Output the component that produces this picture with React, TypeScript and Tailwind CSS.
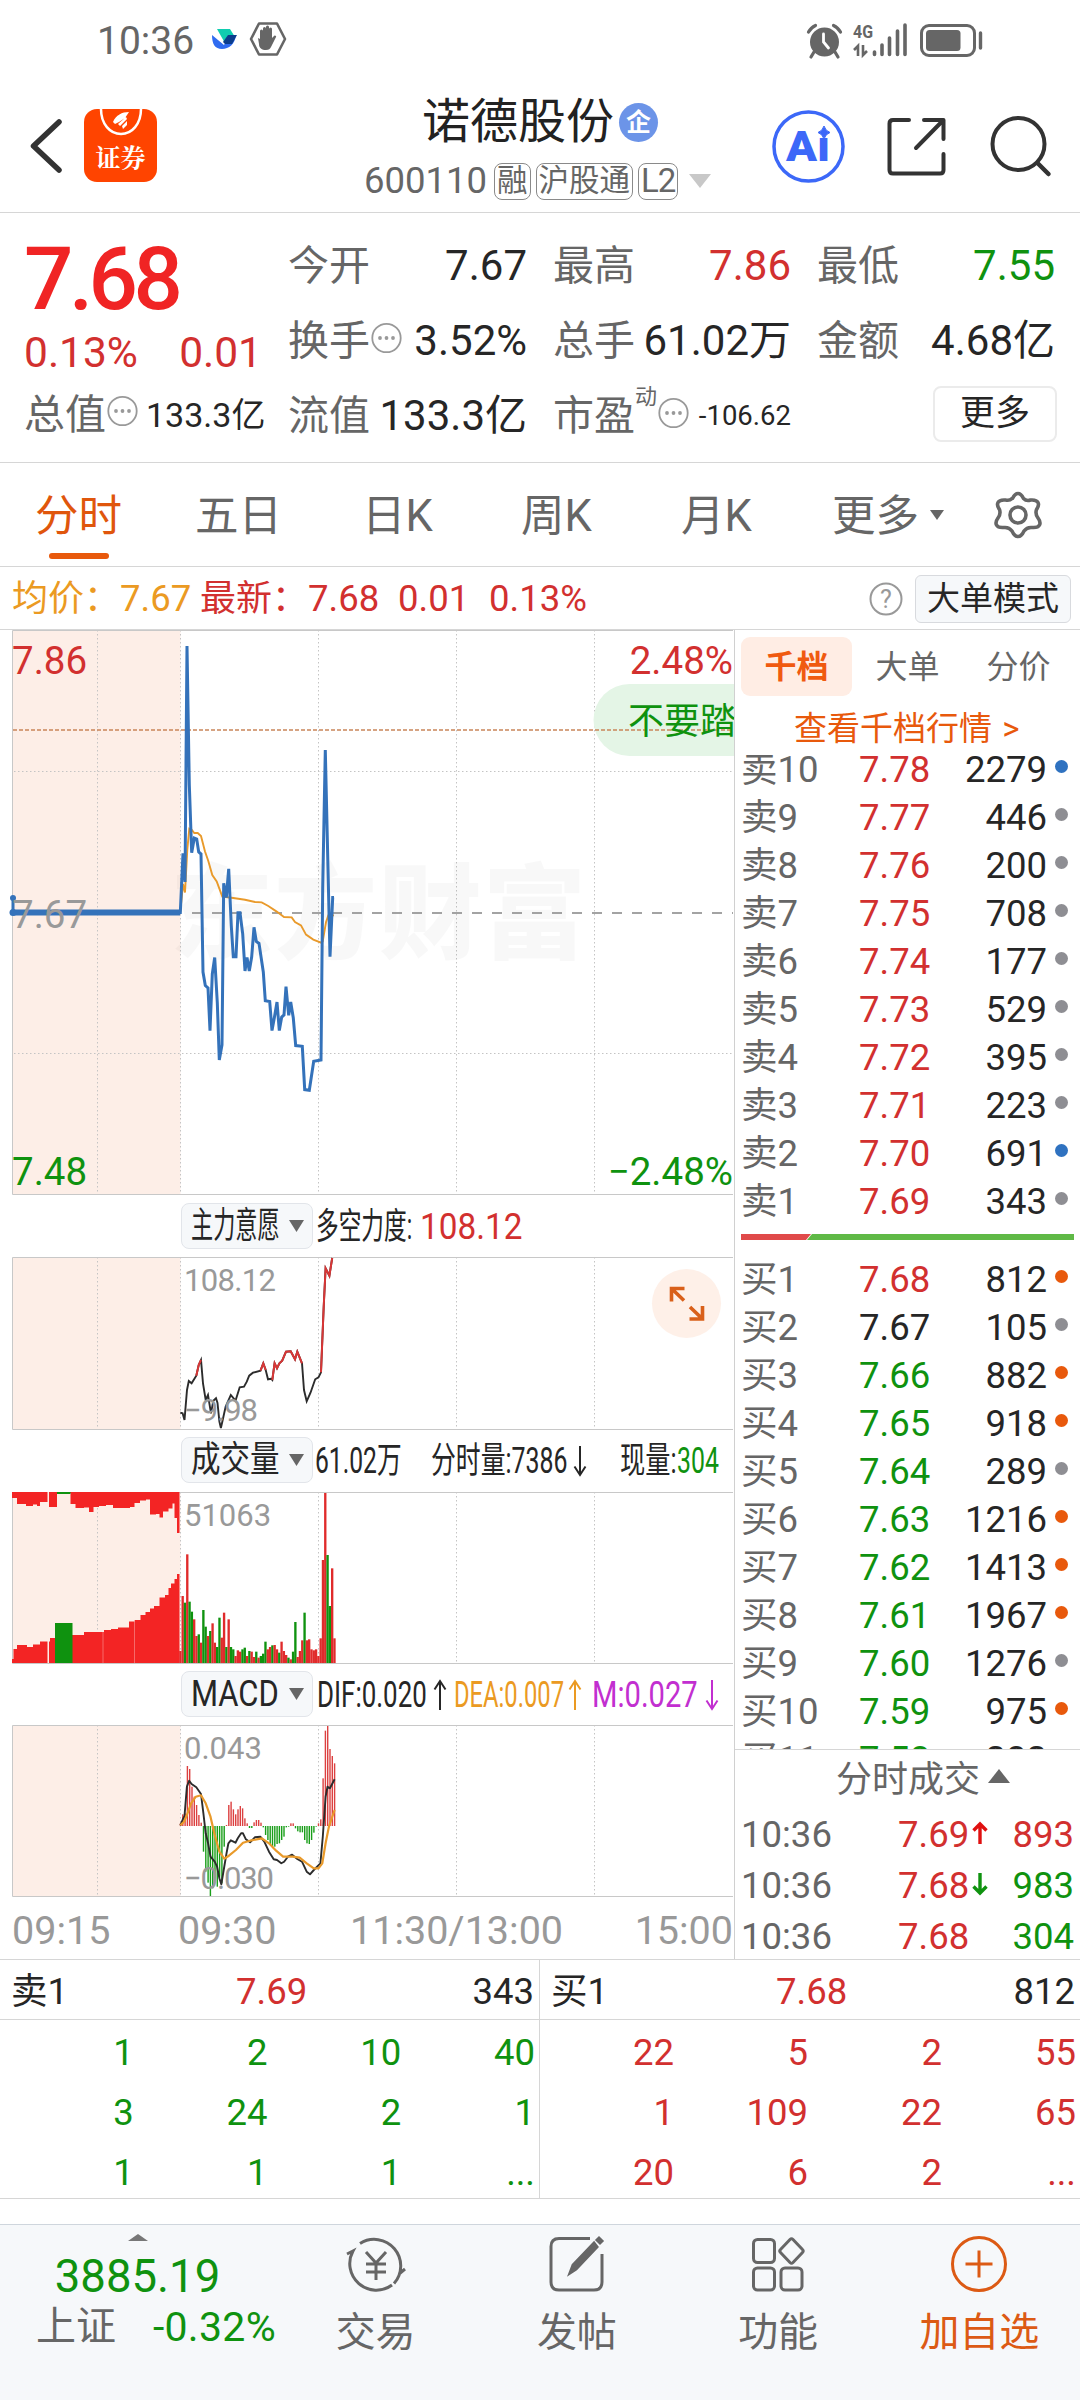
import { ReactNode } from 'react';

type Point = [number, number];

interface DepthRow {
	label: string;
	price: string;
	qty: string;
	color: string;
	dot: string;
}

const RED = 'text-[#d2302f]';
const GREEN = 'text-[#0f920f]';
const DARK = 'text-[#262626]';
const BLUE_DOT = 'bg-[#2f72c0]';
const GRAY_DOT = 'bg-[#8e8e93]';
const ORANGE_DOT = 'bg-[#e8590c]';

const SELLS: DepthRow[] = [
	{ label: '卖10', price: '7.78', qty: '2279', color: RED, dot: BLUE_DOT },
	{ label: '卖9', price: '7.77', qty: '446', color: RED, dot: GRAY_DOT },
	{ label: '卖8', price: '7.76', qty: '200', color: RED, dot: GRAY_DOT },
	{ label: '卖7', price: '7.75', qty: '708', color: RED, dot: GRAY_DOT },
	{ label: '卖6', price: '7.74', qty: '177', color: RED, dot: GRAY_DOT },
	{ label: '卖5', price: '7.73', qty: '529', color: RED, dot: GRAY_DOT },
	{ label: '卖4', price: '7.72', qty: '395', color: RED, dot: GRAY_DOT },
	{ label: '卖3', price: '7.71', qty: '223', color: RED, dot: GRAY_DOT },
	{ label: '卖2', price: '7.70', qty: '691', color: RED, dot: BLUE_DOT },
	{ label: '卖1', price: '7.69', qty: '343', color: RED, dot: GRAY_DOT }
];

const BUYS: DepthRow[] = [
	{ label: '买1', price: '7.68', qty: '812', color: RED, dot: ORANGE_DOT },
	{ label: '买2', price: '7.67', qty: '105', color: DARK, dot: GRAY_DOT },
	{ label: '买3', price: '7.66', qty: '882', color: GREEN, dot: ORANGE_DOT },
	{ label: '买4', price: '7.65', qty: '918', color: GREEN, dot: ORANGE_DOT },
	{ label: '买5', price: '7.64', qty: '289', color: GREEN, dot: GRAY_DOT },
	{ label: '买6', price: '7.63', qty: '1216', color: GREEN, dot: ORANGE_DOT },
	{ label: '买7', price: '7.62', qty: '1413', color: GREEN, dot: ORANGE_DOT },
	{ label: '买8', price: '7.61', qty: '1967', color: GREEN, dot: ORANGE_DOT },
	{ label: '买9', price: '7.60', qty: '1276', color: GREEN, dot: GRAY_DOT },
	{ label: '买10', price: '7.59', qty: '975', color: GREEN, dot: ORANGE_DOT },
	{ label: '买11', price: '7.58', qty: '282', color: GREEN, dot: GRAY_DOT }
];

const PRICE_LINE =
	'13,898 13,912.5 180.3,912.5 183,853.4 185,882 187,646 189.3,784.6 191.7,852.7 194.3,838 196.7,839 198.7,852 201,854 203,972 205.3,985.5 208,988 210,1030.6 212.3,974 214.7,957.5 217.3,1002.7 219.3,1060 222,1044.8 223.7,883.3 226.3,897.5 228.7,868.8 231.3,926 233.3,956.8 236,956.8 238,912.8 240,912.8 242.7,933.8 245,971 247,957.5 249.3,971 251.7,956.8 254,927.3 256.3,941.5 259,943.4 263.3,972 265.3,1000.8 269.7,1001.5 272,1030.6 274.3,1018 277,1002 279.3,1030.6 281.7,1017 284,1015 286,986.6 288.7,1015.3 290.7,1002 293.3,1018 295.7,1045.6 302.3,1046.3 304.7,1089.6 309.3,1090.3 313.7,1061.3 321,1060 322.7,888 325.3,750 328,868.8 330,956.8 332.7,897.5 334,897.5';
const AVG_LINE =
	'180.3,912.5 183,884 185,892.5 187.3,849.6 189.3,828.6 191.7,829.7 194.3,833 197.7,833 201,836 205,851.5 208.3,861 212.3,875 216.7,881.4 222.3,896.7 233.3,898 245,899.7 255,902 261.7,902.4 268.3,906 276.7,911.6 284,917 291.7,917.4 295,922 301,925.4 306,934.6 313.3,939.6 321,942.6 322.7,941.5 326,922.3 328.3,915.4 334,915.4';

const FORCE_LINE =
	'180.3,1412.7 182.6,1413.3 184.5,1420 187,1390 188.8,1381 191.6,1383.3 196.3,1375.7 198.7,1365 201,1360 203,1383.3 205.7,1400 208,1395 211,1413.3 213.3,1400.7 216,1398.3 217.5,1403 219.4,1421.7 220.9,1428 222.7,1420 225.6,1406.7 230.8,1395 235.5,1400.7 239.7,1387.3 244,1386.7 246.8,1381.7 249.2,1375.7 253,1372.7 260.5,1370.7 263.3,1363.3 265.7,1370 268,1379.3 271,1378.7 272.3,1380 274.6,1363.3 277,1368.3 279.4,1363.3 282.2,1360.7 286,1351.7 290.7,1351.3 295,1359.3 297.3,1351.7 302,1363.3 304,1390 306.7,1401.3 310.5,1392.7 315.2,1379.3 318.5,1377.3 321,1372.3 323.7,1306.7 325.6,1268.3 329.4,1275.7 332.2,1258';
const FORCE_RED = [
	'196.3,1375.7 198.7,1365 201,1360',
	'260.5,1370.7 263.3,1363.3 265.7,1370',
	'272.3,1380 274.6,1363.3 277,1368.3 279.4,1363.3 282.2,1360.7 286,1351.7 290.7,1351.3 295,1359.3 297.3,1351.7 302,1363.3',
	'321,1372.3 323.7,1306.7 325.6,1268.3 329.4,1275.7 332.2,1258'
];

// one value per minute from 09:30, negative = falling minute
const VOLUME = [
	36, 201, -181, 326, -184, -154, 131, 81, -86, 61, -159, -109, 81, -96, 119, 61, -48, -136, 76, 151, -48, 131, -48, -41, 21, 38, 34, -41, -46,
	21, -36, 34, 18, -34, 16, -21, -28, -64, 41, 48, -53, 54, 41, -31, 64, 36, 24, -16, 11, -34, -123, 18, 36, 68, -151, 68, 71, 41, 38, 41, 21,
	74, 309, 510, -324, -171, 284, 74
];
const MACD_BARS = [
	8, 35, 38, 180, 171, 118, 88, 63, 33, 10, -77, -137, -170, -210, -187, -157, -182, -152, -172, -62, 3, 63, 73, 50, 35, 50, 60, 53, 23, 8, -6,
	-6, 11, 18, 18, 10, -4, -27, -42, -54, -62, -62, -54, -52, -42, -32, -4, -2, 8, 8, -7, -16, -19, -19, -42, -52, -54, -42, -20, -2, 8, 20, 143,
	286, 300, 231, 210, 188
];

// call auction: [x, height] steps
const AUCTION_BOTTOM: Point[] = [
	[12, 4], [13.5, 14], [17, 18], [27, 16], [33, 18.5], [40, 21.5], [50, 25], [70, 28], [84, 31], [104, 33], [111, 34], [118, 35.5], [129, 41.5],
	[134.5, 43], [140.5, 48], [145.5, 51], [150, 54.5], [154, 57], [159.5, 65.5], [165, 68], [168.5, 75], [171, 79.5], [174.5, 84], [177, 89], [179.5, 0]
];
const AUCTION_TOP: Point[] = [
	[12, 6], [17, 12], [26, 14], [33, 12.5], [37, 14], [40, 10], [49, 15], [57, 1], [70.5, 12], [75.5, 16], [84, 15.5], [89, 20], [93.5, 15], [99, 14],
	[106, 13], [113, 16], [130, 15], [134.5, 11], [140, 8.5], [146, 7.5], [150, 22.5], [156, 22], [159.5, 25.5], [163, 19.5], [168.5, 16.5],
	[172.5, 11.5], [174.5, 26], [177, 41], [179.5, 0]
];

const DIF_POINTS: Point[] = [
	[382, 466], [387, 450], [391, 438], [396, 350], [401, 332], [406, 342], [416, 352], [426, 372], [431, 430], [436, 490], [441, 520], [446, 560],
	[455, 575], [460, 590], [465, 625], [469, 643], [474, 600], [480, 550], [484, 520], [489, 511], [499, 518], [504, 505], [511, 490], [515, 490],
	[521, 508], [530, 517], [540, 502], [552, 500], [560, 515], [570, 545], [580, 568], [587, 570], [596, 580], [602, 575], [610, 560], [619, 554],
	[630, 567], [640, 575], [650, 605], [657, 613], [665, 600], [679, 580], [684, 500], [690, 380], [694, 350], [699, 355], [709, 328]
];
const DEA_POINTS: Point[] = [
	[382, 466], [390, 455], [396, 435], [405, 400], [415, 380], [426, 376], [436, 400], [446, 440], [455, 495], [465, 545], [475, 566], [485, 557],
	[500, 540], [515, 518], [530, 512], [555, 505], [570, 520], [585, 542], [600, 560], [620, 560], [635, 563], [650, 580], [665, 595], [675, 595],
	[683, 580], [690, 520], [697, 470], [709, 420]
];

const toPoints = (points: Point[]) => points.map(([x, y]) => `${(x * 0.4719).toFixed(1)},${(1670 + y / 3).toFixed(1)}`).join(' ');

const stepPath = (steps: Point[], base: number, dir: number) =>
	`M12 ${base}` + steps.map(([x, h], i) => `${i ? `H${x}` : ''}V${base + dir * h}`).join('') + 'Z';

const Grid = ({ top, bottom }: { top: number; bottom: number }) => (
	<g fill="none" strokeWidth="1">
		<rect x="13" y={top} width="167.5" height={bottom - top} fill="#fdeee7" />
		{[97.5, 180.5, 318.5, 456.5, 594.5].map((x) => (
			<path key={x} d={`M${x} ${top}V${bottom}`} stroke="#c4c4c4" strokeDasharray="1.5 2.5" />
		))}
		<path d={`M733 ${top + 0.5}H12.5V${bottom + 0.5}H733`} stroke="#c8c8c8" />
	</g>
);

const InfoDot = () => (
	<svg width="32" height="32" viewBox="0 0 32 32" className="shrink-0">
		<circle cx="16.5" cy="16" r="14.2" fill="none" stroke="#999" strokeWidth="1.8" />
		<circle cx="10" cy="16" r="1.9" fill="#999" />
		<circle cx="16.5" cy="16" r="1.9" fill="#999" />
		<circle cx="23" cy="16" r="1.9" fill="#999" />
	</svg>
);

const StatusBar = () => (
	<div className="flex h-[80px] items-center justify-between pl-[97px] pr-[97px] text-[39px] text-[#666]">
		<div className="flex items-center">
			<span className="w-[99px] pt-[2px] leading-[82px]">10:36</span>
			<svg width="100" height="40" viewBox="196 21 100 40" className="mt-[1px]">
				<path d="M217 29h13l5 8-9 8z" fill="#10cdb0" />
				<path d="M212 35l12 10 4-7 8-3c-1 9-7 14-14 14s-10-5-10-14z" fill="#2f6bf0" />
				<path d="M223 42l5-7h9l-5 9h-7z" fill="#0c3d8c" />
				<path d="M259 23.500h18l8 15.500-8 15.500h-18l-8-15.500z" fill="none" stroke="#666" strokeWidth="2.600" strokeLinejoin="round" />
				<path d="M260 39v-8a1.500 1.500 0 013 0v-2.500a1.500 1.500 0 013 0V27a1.500 1.500 0 013 0v2a1.500 1.500 0 013 0v9l2.500-2.500c2 0 2 1 1 2.500l-4.500 9c-1 2-2 3-5 3-4 0-7-2-7-6l-1-6z" fill="#666" />
			</svg>
		</div>
		<svg width="180" height="40" viewBox="803 19 180 40">
			<circle cx="824.500" cy="41" r="14.500" fill="#666" />
			<path d="M814 51l-3 5M835 51l3 5M808.500 31a15 15 0 017-6.500M840.500 31a15 15 0 00-7-6.500" stroke="#666" strokeWidth="3.200" strokeLinecap="round" fill="none" />
			<path d="M823.500 33v8l5 6" stroke="#fff" strokeWidth="2.800" fill="none" strokeLinecap="round" />
			<text x="853" y="37" fontSize="19" fontWeight="700" textLength="20" lengthAdjust="spacingAndGlyphs" fill="#666">4G</text>
			<path d="M854 49l4-4v10M863 44v10l4-4" stroke="#666" strokeWidth="2.600" fill="none" />
			<path d="M874.500 51v2.500M882 44v9.500M889.500 37v16.500M897.500 30v23.500M905 24v29.500" stroke="#666" strokeWidth="3.600" strokeLinecap="round" />
			<rect x="921.500" y="24.500" width="53" height="30" rx="7.500" fill="none" stroke="#666" strokeWidth="3" />
			<rect x="926" y="29" width="34.500" height="21" rx="3.500" fill="#666" />
			<path d="M980.500 32v15" stroke="#666" strokeWidth="3.400" strokeLinecap="round" />
		</svg>
	</div>
);

const Tag = ({ children }: { children: ReactNode }) => (
	<span className="flex h-[37px] shrink-0 items-center rounded-[8px] border-[1.5px] border-[#8a8a8a] px-[2px] text-[30.500px] leading-[34px] whitespace-nowrap">
		{children}
	</span>
);

const Header = () => (
	<div className="flex h-[133px] items-center border-b border-[#d6d6d6]">
		<svg width="34" height="56" viewBox="29 117 34 56" className="ml-[29px] mb-[1px]">
			<path d="M59 121L33.500 145 59 169" fill="none" stroke="#333" strokeWidth="5.500" strokeLinecap="round" strokeLinejoin="round" />
		</svg>
		<div className="relative mb-[1px] ml-[21px] flex h-[73px] w-[73px] items-end justify-center overflow-hidden rounded-[13px] bg-[#ff4400]">
			<svg width="73" height="30" viewBox="0 0 73 30" className="absolute top-0 left-0">
				<path d="M17 0c0 15 9 25 20 25S57 15 57 0" fill="none" stroke="#fff" strokeWidth="2.500" />
				<path d="M29 13C32 6 38 3 45 3l-4 6-6 4-4 2zM34 15l8-7 1 2-7 7zM38 17l5-5v4l-4 4z" fill="#fff" />
			</svg>
			<span className="pb-[12px] font-['Noto_Serif_CJK_SC','Noto_Sans_CJK_SC',serif] text-[25px] leading-[28px] font-bold text-white">证券</span>
		</div>
		<div className="ml-[207px] flex w-[350px] flex-col">
			<div className="flex h-[70px] items-center pl-[58px]">
				<span className="text-[48px] leading-[70px] text-[#222]">诺德股份</span>
				<span className="ml-[5px] flex h-[39px] w-[39px] items-center justify-center rounded-full bg-[#6c94e8] text-[25px] leading-[39px] font-bold text-white">企</span>
			</div>
			<div className="flex h-[48px] items-center gap-[5px] text-[36.500px] text-[#666]">
				<span className="w-[125px] leading-[48px]">600110</span>
				<Tag>融</Tag>
				<Tag>沪股通</Tag>
				<Tag>
					<span className="text-[33px] tracking-[-1px]">L2</span>
				</Tag>
				<svg width="24" height="16" viewBox="0 0 24 16" className="ml-[5px]">
					<path d="M1 1h22L12 15z" fill="#c8c8c8" />
				</svg>
			</div>
		</div>
		<svg width="290" height="90" viewBox="770 100 290 90" className="mb-[1px] ml-[56px]">
			<circle cx="808.500" cy="145.500" r="34.500" fill="none" stroke="#3c68f8" strokeWidth="3.500" />
			<text x="786" y="160" fontSize="42" fontWeight="900" fill="#3c68f8" textLength="44" lengthAdjust="spacingAndGlyphs">Aı</text>
			<path d="M824 125q1.500 5 6 6.500-4.500 1.500-6 6.500-1.500-5-6-6.500 4.500-1.500 6-6.500z" fill="#3c68f8" stroke="#3c68f8" strokeWidth="1" />
			<path d="M909 119H893q-3.500 0-3.500 3.500V169q0 3.500 3.500 3.500h47q3.500 0 3.500-3.500V153M924 119h19.500v19M942 120.500L916 147" fill="none" stroke="#333" strokeWidth="4" strokeLinecap="round" strokeLinejoin="round" />
			<circle cx="1018.500" cy="143" r="26" fill="none" stroke="#333" strokeWidth="4" />
			<path d="M1037.500 162l11 11" stroke="#333" strokeWidth="4.500" strokeLinecap="round" />
		</svg>
	</div>
);

const Stat = ({ label, value, color = DARK }: { label: ReactNode; value: string; color?: string }) => (
	<div className="flex h-[75px] items-center justify-between whitespace-nowrap">
		<span className="flex items-center text-[41px] text-[#666]">{label}</span>
		<span className={`text-[42px] ${color}`}>{value}</span>
	</div>
);

const Quote = () => (
	<div className="flex h-[250px] border-b border-[#d6d6d6] pl-[24px] leading-[50px]">
		<div className="flex w-[238px] flex-col pt-[28px]">
			<span className="h-[76px] text-[87px] leading-[76px] font-medium tracking-[-4.500px] text-[#f02424]">7.68</span>
			<div className={`mt-[11px] flex h-[50px] items-center justify-between text-[42.500px] leading-[50px] ${RED}`}>
				<span>0.13%</span>
				<span>0.01</span>
			</div>
			<div className="mt-[12px] flex h-[50px] items-center whitespace-nowrap text-[#666]">
				<span className="text-[41px]">总值</span>
				<span className="mb-[8px] flex">
					<InfoDot />
				</span>
				<span className={`ml-[8px] text-[34px] ${DARK}`}>133.3亿</span>
			</div>
		</div>
		<div className="ml-[26px] grid grid-cols-[239px_238px_238px] gap-x-[26px] self-start pt-[15px]">
			<Stat label="今开" value="7.67" />
			<Stat label="最高" value="7.86" color={RED} />
			<Stat label="最低" value="7.55" color={GREEN} />
			<Stat
				label={
					<>
						换手
						<span className="mb-[6px] flex">
							<InfoDot />
						</span>
					</>
				}
				value="3.52%"
			/>
			<Stat label="总手" value="61.02万" />
			<Stat label="金额" value="4.68亿" />
			<Stat label="流值" value="133.3亿" />
			<div className="flex h-[75px] items-center text-[41px] text-[#666]">
				市盈
				<span className="mb-[38px] text-[22px] leading-[30px]">动</span>
				<span className="mb-[6px] flex">
					<InfoDot />
				</span>
				<span className={`ml-auto text-[27.500px] ${DARK}`}>-106.62</span>
			</div>
			<div className="flex h-[75px] items-center justify-end pb-[3px]">
				<span className={`mr-[-2px] flex h-[56px] w-[124px] items-center justify-center rounded-[8px] border-2 border-[#ebebeb] text-[35px] ${DARK}`}>更多</span>
			</div>
		</div>
	</div>
);

const Tabs = () => (
	<div className="flex h-[104px] items-center border-b border-[#d6d6d6] text-[43.500px] leading-[60px] text-[#666]">
		<span className="relative ml-[35px] w-[160px] pt-[4px] text-[#e0560c]">
			分时
			<i className="absolute bottom-[-12px] left-[14px] h-[6px] w-[60px] rounded-full bg-[#e8590c]" />
		</span>
		<span className="w-[167px] pt-[4px]">五日</span>
		<span className="w-[159px] pt-[4px]">日K</span>
		<span className="w-[160px] pt-[4px]">周K</span>
		<span className="w-[151px] pt-[4px]">月K</span>
		<span className="pt-[4px]">更多</span>
		<svg width="16" height="12" viewBox="0 0 16 12" className="ml-[10px]">
			<path d="M1 1h14L8 11z" fill="#666" />
		</svg>
		<svg width="56" height="56" viewBox="0 0 56 56" fill="none" stroke="#666" strokeWidth="3.6" strokeLinejoin="round" className="mt-[1px] ml-[45px]">
			<path d="M22.500 8.500q2.500-5 5.500-5t5.500 5q3 3 7 1.500 6-.5 7.500 2.500t-1.500 7q-1.500 4.500 1.500 8.500 3 4 1.500 7t-7.500 2.500q-5-.5-8 3.500-2.500 5.500-6 5.500t-6-5.500q-3-4-8-3.500-6 .5-7.500-2.500t1.500-7q3-4 1.500-8.500-3-4-1.500-7t7.500-2.500q4 1 6.500-1.500z" transform="translate(0 3)" />
			<circle cx="28" cy="28" r="8" />
		</svg>
	</div>
);

const AvgBar = () => (
	<div className="flex h-[63px] items-center border-b border-[#d6d6d6] pt-[2px] pl-[12px] text-[36.500px] leading-[50px] whitespace-nowrap">
		<span className="w-[108px] text-[36px] text-[#eb9a22]">均价：</span>
		<span className="w-[80px] text-[#eb9a22]">7.67</span>
		<span className={`w-[108px] text-[36px] ${RED}`}>最新：</span>
		<span className={`w-[90px] ${RED}`}>7.68</span>
		<span className={`w-[91px] ${RED}`}>0.01</span>
		<span className={`w-[300px] ${RED}`}>0.13%</span>
		<svg width="34" height="34" viewBox="0 0 34 34" className="mb-[1px] ml-[80px]">
			<circle cx="17" cy="17" r="15.500" fill="none" stroke="#999" strokeWidth="2" />
			<text x="17" y="26" fontSize="25" textAnchor="middle" fill="#999">?</text>
		</svg>
		<span className="ml-[12px] flex h-[48px] w-[156px] items-center justify-center rounded-[6px] border border-[#d8dade] bg-[#f6f8fa] text-[33px] text-[#262626]">大单模式</span>
	</div>
);

const PriceChart = () => (
	<svg width="734" height="566" viewBox="0 630 734 566" className="block">
		<Grid top={630} bottom={1194} />
		<text x="170" y="951" fontSize="103" fontWeight="900" fill="#000" fillOpacity=".028" textLength="416">东方财富</text>
		<path d="M14 771.500H733M14 1053.500H733" stroke="#c4c4c4" strokeDasharray="1.500 2.500" />
		<path d="M593.500 720a36 36 0 0136-36H734v72H629.500a36 36 0 01-36-36z" fill="#e4f5e6" />
		<path d="M13 730H733" stroke="#c98559" strokeWidth="1.300" strokeDasharray="4 2" />
		<path d="M192 913H733" stroke="#858585" strokeWidth="1.500" strokeDasharray="10 10" />
		<text x="628" y="733.500" fontSize="36" fill="#0f920f">不要踏</text>
		<g fontSize="38.500">
			<text x="12" y="673.500" fill="#d2302f">7.86</text>
			<text x="12" y="1184.500" fill="#0f920f">7.48</text>
			<text x="733" y="673.500" fill="#d2302f" textAnchor="end">2.48%</text>
			<text x="733" y="1184.500" fill="#0f920f" textAnchor="end">−2.48%</text>
		</g>
		<polyline points={AVG_LINE} fill="none" stroke="#e99a2b" strokeWidth="1.900" />
		<polyline points={PRICE_LINE} fill="none" stroke="#3472ba" strokeWidth="3" />
		<path d="M13 912.500H180" stroke="#3472ba" strokeWidth="6" />
		<circle cx="13" cy="898" r="3" fill="#3472ba" />
		<circle cx="13" cy="912.500" r="3.500" fill="#3472ba" />
		<text x="12" y="928" fontSize="38.500" fill="#999">7.67</text>
	</svg>
);

const Indicator = ({ name, scale, children }: { name: string; scale: string; children: ReactNode }) => (
	<div className="flex h-[61px] items-center pl-[181px] text-[36px] leading-[44px] whitespace-nowrap text-[#262626]">
		<span className="mb-[2px] flex h-[46px] w-[132px] shrink-0 items-center rounded-[8px] border border-[#e2e5ea] bg-[#f6f8fa] pt-[1px] pl-[9px]">
			<span className="w-[89px]">
				<span className={`inline-block origin-left ${scale}`}>{name}</span>
			</span>
			<svg width="17" height="14" viewBox="0 0 17 14" className="ml-[8px] shrink-0">
				<path d="M1 1h15L8.500 13z" fill="#666" />
			</svg>
		</span>
		{children}
	</div>
);

const Arrow = ({ down = false }: { down?: boolean }) => (
	<svg width="14" height="32" viewBox="0 0 14 32" className={`shrink-0 ${down ? 'rotate-180' : ''}`}>
		<path d="M7 31V2M1.500 10.500L7 2l5.500 8.500" fill="none" stroke="currentColor" strokeWidth="2" />
	</svg>
);

const ForceChart = () => (
	<svg width="734" height="173" viewBox="0 1257 734 173" className="block">
		<Grid top={1257} bottom={1429} />
		<polyline points={FORCE_LINE} fill="none" stroke="#2c2c2c" strokeWidth="1.900" />
		{FORCE_RED.map((points) => (
			<polyline key={points} points={points} fill="none" stroke="#d93636" strokeWidth="2" />
		))}
		<text x="184" y="1291" fontSize="31" fill="#999" textLength="92">108.12</text>
		<text x="184" y="1421" fontSize="31" fill="#999" textLength="74">−9.98</text>
		<circle cx="686.500" cy="1303.500" r="34.500" fill="#fef0e8" />
		<path d="M671.500 1301.500v-13h13M672 1289l12 11.500M702.500 1306v13h-13M702 1318.500l-12-11.500" fill="none" stroke="#d9601a" strokeWidth="3.6" />
	</svg>
);

const VolumeChart = () => (
	<svg width="734" height="173" viewBox="0 1490 734 173" className="block">
		<Grid top={1491} bottom={1662} />
		<path d={stepPath(AUCTION_BOTTOM, 1662, -1)} fill="#f32424" />
		<path d={stepPath(AUCTION_TOP, 1491, 1)} fill="#f32424" />
		<path d="M55 1622h17.500v40H55zM57 1491h13.500v2H57z" fill="#0f920f" />
		<path d="M47.500 1505V1491h1.500v14zM47.500 1662v-26h1.500v26z" fill="#fdeee7" />
		<path d="M103 1630V1662M134.500 1619V1662" stroke="#fff" strokeOpacity=".4" strokeWidth=".8" />
		{VOLUME.map((v, i) => (
			<rect key={i} x={179.200 + i * 2.3} y={1662 - Math.abs(v) / 3} width="2.350" height={Math.abs(v) / 3} fill={v > 0 ? '#e02b2b' : '#0f920f'} />
		))}
		<text x="184" y="1525" fontSize="31" fill="#999">51063</text>
	</svg>
);

const MacdChart = () => (
	<svg width="734" height="173" viewBox="0 1725 734 173" className="block">
		<Grid top={1725} bottom={1896} />
		{MACD_BARS.map((v, i) => (
			<rect key={i} x={179.800 + i * 2.3} y={v > 0 ? 1826 - v / 3 : 1826} width="1.400" height={Math.abs(v) / 3} fill={v > 0 ? '#dc4040' : '#1a9e1a'} />
		))}
		<polyline points={toPoints(DIF_POINTS)} fill="none" stroke="#2c2c2c" strokeWidth="1.900" strokeLinejoin="round" />
		<polyline points={toPoints(DEA_POINTS)} fill="none" stroke="#e99a2b" strokeWidth="2.200" strokeLinejoin="round" />
		<text x="184" y="1759" fontSize="31" fill="#999">0.043</text>
		<text x="184" y="1889" fontSize="31" fill="#999" textLength="90">−0.030</text>
	</svg>
);

const Charts = () => (
	<div className="flex w-[734px] flex-col">
		<PriceChart />
		<Indicator name="主力意愿" scale="scale-x-[0.615]">
			<span className="ml-[3px] w-[104px]">
				<span className="inline-block origin-left scale-x-[0.63]">多空力度:</span>
			</span>
			<span className={`text-[37px] ${RED}`}>
				<span className="inline-block origin-left scale-x-[0.9]">108.12</span>
			</span>
		</Indicator>
		<ForceChart />
		<Indicator name="成交量" scale="scale-x-[0.82]">
			<span className="ml-[2px] w-[116px]">
				<span className="inline-block origin-left scale-x-[0.685]">61.02万</span>
			</span>
			<span className="w-[142px]">
				<span className="inline-block origin-left scale-x-[0.69]">分时量:7386</span>
			</span>
			<Arrow down />
			<span className="ml-[33px] w-[57px]">
				<span className="inline-block origin-left scale-x-[0.7]">现量:</span>
			</span>
			<span className={GREEN}>
				<span className="inline-block origin-left scale-x-[0.69]">304</span>
			</span>
		</Indicator>
		<VolumeChart />
		<Indicator name="MACD" scale="scale-x-[0.86]">
			<span className="ml-[4px] w-[116px]">
				<span className="inline-block origin-left scale-x-[0.72]">DIF:0.020</span>
			</span>
			<Arrow />
			<span className="flex items-center text-[#eb9a22]">
				<span className="ml-[7px] w-[114px]">
					<span className="inline-block origin-left scale-x-[0.66]">DEA:0.007</span>
				</span>
				<Arrow />
			</span>
			<span className="flex items-center text-[#c22fd0]">
				<span className="ml-[10px] w-[113px]">
					<span className="inline-block origin-left scale-x-[0.81]">M:0.027</span>
				</span>
				<Arrow down />
			</span>
		</Indicator>
		<MacdChart />
		<div className="flex h-[61px] items-center pt-[4px] pr-[1px] pl-[12px] text-[39.500px] leading-[60px] text-[#999]">
			<span className="w-[166px]">09:15</span>
			<span className="w-[172px]">09:30</span>
			<span>11:30/13:00</span>
			<span className="ml-auto">15:00</span>
		</div>
	</div>
);

const Depth = ({ row }: { row: DepthRow }) => (
	<div className="flex h-[48px] shrink-0 items-center text-[36.500px] leading-[48px]">
		<span className="w-[118px] text-[#666]">{row.label}</span>
		<span className={`w-[80px] ${row.color}`}>{row.price}</span>
		<span className={`w-[108px] text-right ${DARK}`}>{row.qty}</span>
		<i className={`mb-[8px] ml-[8px] h-[13px] w-[13px] rounded-full ${row.dot}`} />
	</div>
);

const TRADES = [
	{ price: '7.69', arrow: '↑', qty: '893', color: RED },
	{ price: '7.68', arrow: '↓', qty: '983', color: GREEN },
	{ price: '7.68', arrow: '', qty: '304', color: GREEN }
];

const OrderBook = () => (
	<div className="flex w-[346px] flex-col border-l border-[#d0d0d0] pl-[6px]">
		<div className="mt-[7px] flex h-[59px] shrink-0 text-[32px] leading-[61px] text-[#666]">
			<span className="w-[111px] rounded-[9px] bg-[#ffede4] text-center font-bold text-[#f05a10]">千档</span>
			<span className="w-[111px] text-center">大单</span>
			<span className="w-[111px] text-center">分价</span>
		</div>
		<div className="h-[59px] shrink-0 pl-[53px] text-[33px] leading-[65px] text-[#e8590c]">
			查看千档行情 <span className="ml-[2px]">&gt;</span>
		</div>
		<div className="flex h-[994px] shrink-0 flex-col overflow-hidden">
			<div className="mt-[-9px] flex flex-col">
				{SELLS.map((row) => (
					<Depth key={row.label} row={row} />
				))}
			</div>
			<svg width="333" height="6" viewBox="0 0 333 6" className="mt-[8px] shrink-0">
				<path d="M0 0h70l-5 6H0z" fill="#e04a4a" />
				<path d="M71 0h262v6H66z" fill="#5fb946" />
			</svg>
			<div className="mt-[16px] flex flex-col">
				{BUYS.map((row) => (
					<Depth key={row.label} row={row} />
				))}
			</div>
		</div>
		<div className="ml-[-6px] border-t border-[#d6d6d6] pl-[6px]">
			<div className="flex h-[59px] items-center pl-[95px] text-[36px] leading-[60px] text-[#666]">
				分时成交
				<svg width="22" height="14" viewBox="0 0 22 14" className="mb-[8px] ml-[8px]">
					<path d="M0 14L11 0l11 14z" fill="#666" />
				</svg>
			</div>
			{TRADES.map((trade, i) => (
				<div key={i} className="flex h-[51.300px] items-center text-[36.500px] leading-[50px]">
					<span className="w-[157px] text-[#666]">10:36</span>
					<span className={RED}>{trade.price}</span>
					<span className={`mb-[4px] ml-[1px] flex w-[20px] justify-center ${trade.arrow === '↑' ? 'text-[#e01010]' : GREEN}`}>
						{trade.arrow && (
							<svg width="16" height="24" viewBox="0 0 16 24" className={trade.arrow === '↓' ? 'rotate-180' : ''}>
								<path d="M8 23V3M1.500 9.500L8 3l6.500 6.500" fill="none" stroke="currentColor" strokeWidth="3.400" />
							</svg>
						)}
					</span>
					<span className={`ml-auto pr-[6px] ${trade.color}`}>{trade.qty}</span>
				</div>
			))}
		</div>
	</div>
);

const QueueHalf = ({ label, price, qty, items, color }: { label: string; price: string; qty: string; items: string[]; color: string }) => (
	<div className="flex w-1/2 flex-col border-[#d6d6d6] text-[36.500px] leading-[58px] first:border-r">
		<div className="flex h-[60px] border-b border-[#d6d6d6] pt-[3px] pr-[5px] pl-[11px] text-[#262626]">
			<span className="w-[225px]">{label}</span>
			<span className={RED}>{price}</span>
			<span className="ml-auto">{qty}</span>
		</div>
		<div className={`grid grid-cols-4 pt-[3px] pr-[4px] text-right leading-[60px] ${color}`}>
			{items.map((item, i) => (
				<span key={i}>{item}</span>
			))}
		</div>
	</div>
);

const NavItem = ({ label, children, active = false }: { label: string; children: ReactNode; active?: boolean }) => (
	<div className={`flex w-[201.500px] flex-col items-center ${active ? 'text-[#dc5a14]' : 'text-[#666]'}`}>
		<svg width="66" height="60" viewBox="0 0 66 60" fill="none" stroke="currentColor" strokeWidth="3" className="mt-[9px]">
			{children}
		</svg>
		<span className="mt-[9px] text-[40px] leading-[60px]">{label}</span>
	</div>
);

const BottomBar = () => (
	<div className="flex h-[176px] border-t border-[#cfd6dd] bg-[#f6f8fa]">
		<div className="flex w-[275px] shrink-0 flex-col items-center">
			<svg width="20" height="7" viewBox="0 0 20 7" className="mt-[9px]">
				<path d="M0 7L10 0l10 7z" fill="#777" />
			</svg>
			<span className="mt-[9px] text-[45.500px] leading-[54px] text-[#0f920f]">3885.19</span>
			<div className="mt-[-2px] ml-[36px] flex h-[50px] w-[240px] items-center justify-between self-start text-[40px] leading-[50px]">
				<span className="text-[#666]">上证</span>
				<span className="text-[41px] tracking-[0.3px] text-[#0f920f]">-0.32%</span>
			</div>
		</div>
		<NavItem label="交易">
			<path d="M17 9.500A26.500 26.500 0 0151 49.500M49 51A26.500 26.500 0 0110 17l-6 3M56 40l6-5" />
			<path d="M23 18l10 11 10-11M33 29v17M23 30h20M23 38h20" />
		</NavItem>
		<NavItem label="发帖">
			<path d="M46 4.500H15q-8 0-8 8V48q0 8 8 8h35q8 0 8-8V20" />
			<path d="M26 39l3-8 21-22 3 4-21 22zM53 6l2-2 3 3-2 2z" fill="currentColor" />
		</NavItem>
		<NavItem label="功能">
			<rect x="8.500" y="5.500" width="21" height="23" rx="4" />
			<rect x="8.500" y="34" width="21" height="22" rx="4" />
			<rect x="36" y="34" width="21" height="22" rx="4" />
			<path d="M45 5.500q1.500-1.500 3 0l9.500 10q1.500 1.500 0 3l-9.500 10q-1.500 1.500-3 0l-9.500-10q-1.500-1.500 0-3z" />
		</NavItem>
		<NavItem label="加自选" active>
			<circle cx="33" cy="30" r="26.500" />
			<path d="M33 16.500v27M19.500 30h27" />
		</NavItem>
	</div>
);

const App = () => {
	return (
		<div className="flex h-[2400px] w-[1080px] flex-col overflow-hidden bg-white font-[Roboto,'Noto_Sans_CJK_SC',sans-serif]">
			<StatusBar />
			<Header />
			<Quote />
			<Tabs />
			<AvgBar />
			<div className="flex h-[1330px] shrink-0 border-b border-[#d6d6d6]">
				<Charts />
				<OrderBook />
			</div>
			<div className="flex h-[239px] border-b border-[#d6d6d6]">
				<QueueHalf
					label="卖1"
					price="7.69"
					qty="343"
					items={['1', '2', '10', '40', '3', '24', '2', '1', '1', '1', '1', '...']}
					color={GREEN}
				/>
				<QueueHalf
					label="买1"
					price="7.68"
					qty="812"
					items={['22', '5', '2', '55', '1', '109', '22', '65', '20', '6', '2', '...']}
					color={RED}
				/>
			</div>
			<div className="h-[25px]" />
			<BottomBar />
		</div>
	);
};

export default App;
